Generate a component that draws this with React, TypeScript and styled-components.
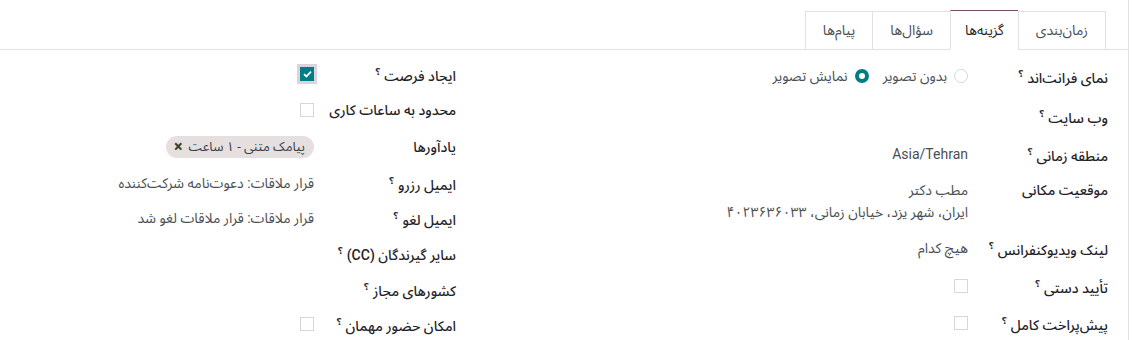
import React from 'react';
import styled, { createGlobalStyle, css } from 'styled-components';

const Global = createGlobalStyle`
  html, body { margin: 0; padding: 0; background: #fff; }
  body { font-family: Roboto, "Noto Sans Arabic", "DejaVu Sans", sans-serif; }
`;

const Sheet = styled.div`
  direction: rtl;
  width: 1128px;
  height: 340px;
  border-right: 1px solid #dee2e6;
  overflow: hidden;
  background: #fff;
`;

const TabBar = styled.div`
  display: flex;
  padding-top: 11px;
  padding-right: 22px;
  border-bottom: 1px solid #dee2e6;
`;

const Tab = styled.div<{ $active?: boolean; $first?: boolean }>`
  height: 38px;
  box-sizing: border-box;
  display: flex;
  align-items: center;
  padding: 0 17px;
  font-size: 14px;
  color: #4a4f55;
  border-top: 1px solid #dee2e6;
  border-left: 1px solid #dee2e6;
  ${(p) => p.$first && css`border-right: 1px solid #dee2e6;`}
  margin-bottom: -1px;
  background: #fff;
  ${(p) =>
    p.$active &&
    css`
      padding: 0 14px;
      border-top-color: #714b67;
      color: #1f1f1f;
      height: 40px;
      margin-top: -1px;
      border-bottom: 1px solid #fff;
    `}
`;

const Body = styled.div`
  display: grid;
  grid-template-columns: 652px 1fr;
  padding-right: 20px;
  padding-top: 6px;
`;

const Group = styled.div`
  display: flex;
  flex-direction: column;
`;

const Row = styled.div<{ $h: number; $label: number; $top?: boolean }>`
  display: grid;
  grid-template-columns: ${(p) => p.$label}px 1fr;
  height: ${(p) => p.$h}px;
  align-items: ${(p) => (p.$top ? 'start' : 'center')};
  ${(p) => p.$top && css`padding-top: 7px; box-sizing: border-box;`}
`;

const Label = styled.div`
  font-size: 14px;
  font-weight: 500;
  color: #1f2328;
  line-height: 22px;
  white-space: nowrap;
`;

const Help = styled.sup`
  font-size: 10px;
  font-weight: 600;
  margin-right: 4px;
  color: #1f2328;
`;

const Value = styled.div`
  font-size: 14px;
  color: #4a4f55;
  line-height: 22px;
  display: flex;
  flex-direction: column;
  align-items: flex-start;
`;

const RadioGroup = styled.div`
  display: flex;
  align-items: center;
  gap: 14px;
`;

const RadioItem = styled.label`
  display: flex;
  align-items: center;
  gap: 7px;
  font-size: 14px;
  color: #4a4f55;
`;

const Radio = styled.span<{ $on?: boolean }>`
  width: 14px;
  height: 14px;
  box-sizing: border-box;
  border-radius: 50%;
  border: 1px solid #d4d7db;
  background: #fff;
  ${(p) => p.$on && css`border: 4px solid #017e84;`}
`;

const Check = styled.span<{ $on?: boolean }>`
  width: 14px;
  height: 14px;
  box-sizing: border-box;
  border: 1px solid #d4d7db;
  background: #fff;
  display: flex;
  align-items: center;
  justify-content: center;
  ${(p) =>
    p.$on &&
    css`
      background: #017e84;
      border-color: #017e84;
      box-shadow: 0 0 0 3px #ddd3dd;
    `}
`;

const Tag = styled.span`
  display: inline-flex;
  align-items: center;
  gap: 6px;
  height: 22px;
  padding: 0 9px 0 8px;
  border-radius: 11px;
  background: #e6dfdf;
  color: #374047;
  font-size: 13px;
`;

const TagX = styled.span`
  font-size: 16px;
  font-weight: 700;
  color: #3a3a3a;
  line-height: 1;
`;

const tabs = ['زمان‌بندی', 'گزینه‌ها', 'سؤال‌ها', 'پیام‌ها'];

const Tick = () => (
  <svg width="9" height="8" viewBox="0 0 9 8">
    <path d="M1 4.2 L3.4 6.4 L8 1.6" stroke="#fff" strokeWidth="1.8" fill="none" />
  </svg>
);

export default function App() {
  return (
    <>
      <Global />
      <Sheet>
        <TabBar>
          {tabs.map((t, i) => (
            <Tab key={t} $first={i === 0} $active={i === 1}>
              {t}
            </Tab>
          ))}
        </TabBar>
        <Body>
          <Group>
            <Row $h={40} $label={140}>
              <Label>
                نمای فرانت‌اند<Help>؟</Help>
              </Label>
              <RadioGroup>
                <RadioItem>
                  <Radio />
                  بدون تصویر
                </RadioItem>
                <RadioItem>
                  <Radio $on />
                  نمایش تصویر
                </RadioItem>
              </RadioGroup>
            </Row>
            <Row $h={40} $label={140}>
              <Label>
                وب سایت<Help>؟</Help>
              </Label>
              <Value />
            </Row>
            <Row $h={36} $label={140}>
              <Label>
                منطقه زمانی<Help>؟</Help>
              </Label>
              <Value>Asia/Tehran</Value>
            </Row>
            <Row $h={58} $label={140} $top>
              <Label>موقعیت مکانی</Label>
              <Value>
                <span>مطب دکتر</span>
                <span>ایران، شهر یزد، خیابان زمانی، ۴۰۲۳۶۳۶۰۳۳</span>
              </Value>
            </Row>
            <Row $h={36} $label={140}>
              <Label>
                لینک ویدیوکنفرانس<Help>؟</Help>
              </Label>
              <Value>هیچ کدام</Value>
            </Row>
            <Row $h={40} $label={140}>
              <Label>
                تأیید دستی<Help>؟</Help>
              </Label>
              <Value>
                <Check />
              </Value>
            </Row>
            <Row $h={34} $label={140}>
              <Label>
                پیش‌پراخت کامل<Help>؟</Help>
              </Label>
              <Value>
                <Check />
              </Value>
            </Row>
          </Group>
          <Group>
            <Row $h={36} $label={142}>
              <Label>
                ایجاد فرصت<Help>؟</Help>
              </Label>
              <Value>
                <Check $on>
                  <Tick />
                </Check>
              </Value>
            </Row>
            <Row $h={36} $label={142}>
              <Label>محدود به ساعات کاری</Label>
              <Value>
                <Check />
              </Value>
            </Row>
            <Row $h={37} $label={142}>
              <Label>یادآورها</Label>
              <Value>
                <Tag>
                  پیامک متنی - ۱ ساعت<TagX>×</TagX>
                </Tag>
              </Value>
            </Row>
            <Row $h={36} $label={142}>
              <Label>
                ایمیل رزرو<Help>؟</Help>
              </Label>
              <Value>قرار ملاقات: دعوت‌نامه شرکت‌کننده</Value>
            </Row>
            <Row $h={34} $label={142}>
              <Label>
                ایمیل لغو<Help>؟</Help>
              </Label>
              <Value>قرار ملاقات: قرار ملاقات لغو شد</Value>
            </Row>
            <Row $h={36} $label={142}>
              <Label>
                سایر گیرندگان (CC)<Help>؟</Help>
              </Label>
              <Value />
            </Row>
            <Row $h={36} $label={142}>
              <Label>
                کشورهای مجاز<Help>؟</Help>
              </Label>
              <Value />
            </Row>
            <Row $h={34} $label={142}>
              <Label>
                امکان حضور مهمان<Help>؟</Help>
              </Label>
              <Value>
                <Check />
              </Value>
            </Row>
          </Group>
        </Body>
      </Sheet>
    </>
  );
}
